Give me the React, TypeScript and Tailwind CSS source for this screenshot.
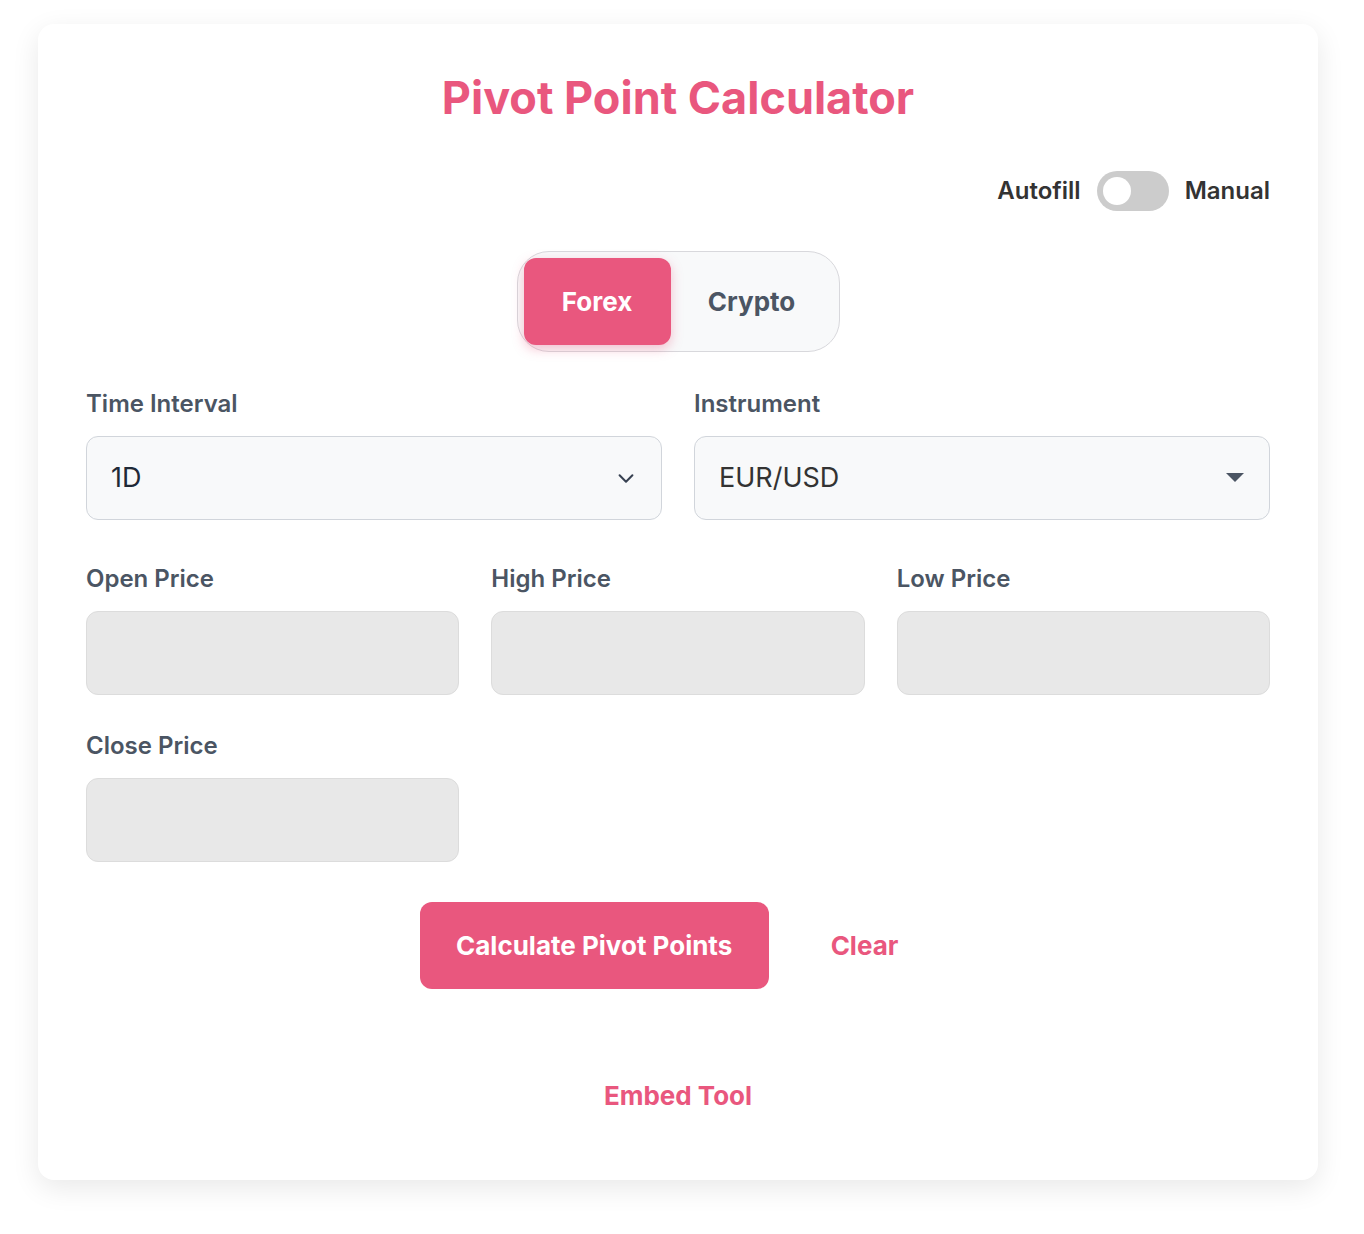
import React from "react";

function Field({ label, className = "" }: { label: string; className?: string }) {
  return (
    <div className={className}>
      <div className="text-[24px] leading-[28px] font-semibold text-[#4b5563]">{label}</div>
      <div className="mt-[18px] h-[84px] rounded-[12px] border border-[#dcdcdc] bg-[#e8e8e8]" />
    </div>
  );
}

export default function App() {
  return (
    <div className="min-h-[1234px] bg-white pt-[24px] pl-[38px]" style={{ fontFamily: "Inter, 'Noto Sans', sans-serif" }}>
      <div className="w-[1280px] rounded-[16px] bg-white px-[48px] pt-[48px] pb-[68px] shadow-[0_8px_28px_rgba(0,0,0,0.09)]">
        <h1 className="text-center text-[45px] leading-[52px] font-bold text-[#e9577e]">Pivot Point Calculator</h1>

        <div className="mt-[47px] flex items-center justify-end gap-[16px]">
          <span className="text-[24px] font-semibold text-[#333333]">Autofill</span>
          <div className="relative h-[40px] w-[72px] rounded-full bg-[#cccccc]">
            <div className="absolute left-[6px] top-[6px] h-[28px] w-[28px] rounded-full bg-white" />
          </div>
          <span className="text-[24px] font-semibold text-[#333333]">Manual</span>
        </div>

        <div className="mt-[40px] flex justify-center">
          <div className="flex h-[101px] w-[323px] items-center rounded-[32px] border border-[#d8d8dc] bg-[#f8f9fa] p-[6px]">
            <div className="flex h-[87px] w-[147px] items-center justify-center rounded-[12px] bg-[#e9577e] text-[26px] font-bold text-white shadow-[0_4px_12px_rgba(233,87,126,0.35)]">
              Forex
            </div>
            <div className="flex flex-1 items-center justify-center text-[26px] font-bold text-[#4b5563]">Crypto</div>
          </div>
        </div>

        <div className="mt-[38px] grid grid-cols-2 gap-[32px]">
          <div>
            <div className="text-[24px] leading-[28px] font-semibold text-[#4b5563]">Time Interval</div>
            <div className="mt-[18px] flex h-[84px] items-center justify-between rounded-[12px] border border-[#d1d5db] bg-[#f8f9fa] pl-[24px] pr-[24px]">
              <span className="text-[27px] text-[#1f2937]">1D</span>
              <svg width="22" height="22" viewBox="0 0 24 24" fill="none" stroke="#374151" strokeWidth="2.2" strokeLinecap="round" strokeLinejoin="round">
                <path d="M5 9l7 7 7-7" />
              </svg>
            </div>
          </div>
          <div>
            <div className="text-[24px] leading-[28px] font-semibold text-[#4b5563]">Instrument</div>
            <div className="mt-[18px] flex h-[84px] items-center justify-between rounded-[12px] border border-[#d1d5db] bg-[#f8f9fa] pl-[24px] pr-[24px]">
              <span className="text-[27px] text-[#333333]">EUR/USD</span>
              <svg width="20" height="12" viewBox="0 0 20 12">
                <path d="M1 1h18L10 10z" fill="#4b5563" />
              </svg>
            </div>
          </div>
        </div>

        <div className="mt-[45px] grid grid-cols-3 gap-[32px]">
          <Field label="Open Price" />
          <Field label="High Price" />
          <Field label="Low Price" />
        </div>

        <div className="mt-[37px] grid grid-cols-3 gap-[32px]">
          <Field label="Close Price" />
        </div>

        <div className="mt-[40px] flex items-center justify-center gap-[30px] pr-[6px]">
          <button className="h-[87px] w-[349px] rounded-[12px] bg-[#e9577e] text-[26px] font-bold text-white">
            Calculate Pivot Points
          </button>
          <button className="px-[32px] text-[26px] font-bold text-[#e9577e]">Clear</button>
        </div>

        <div className="mt-[91px] text-center text-[26px] leading-[32px] font-bold text-[#e9577e]">Embed Tool</div>
      </div>
    </div>
  );
}
